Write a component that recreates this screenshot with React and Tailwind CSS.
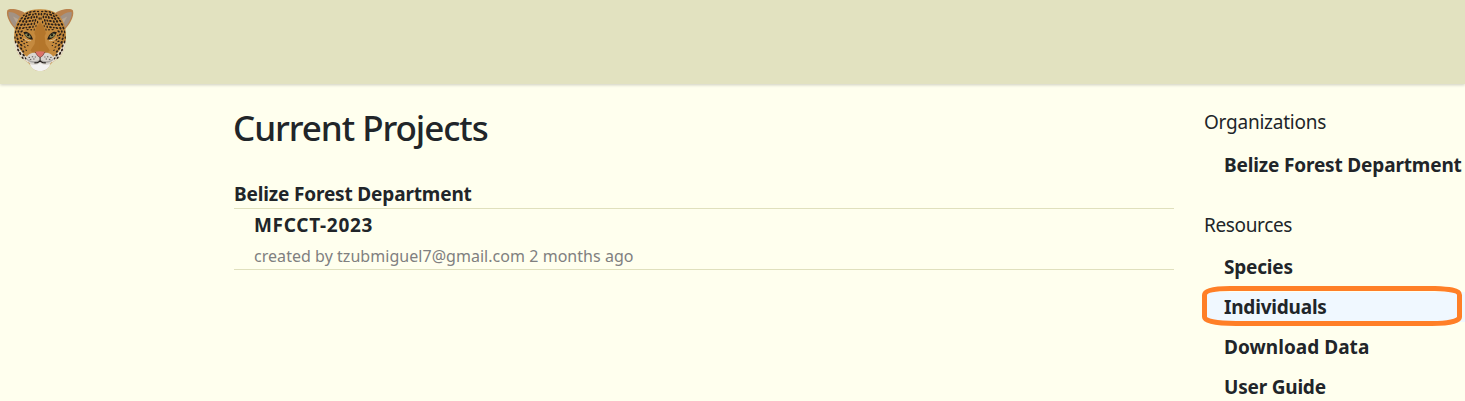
const SPOTS = [
  // x, y, width, height, rotation — left half of the face, mirrored for the right
  [38, 11.4, 1.6, 1, 0], [34.2, 11.4, 2.2, 1, -10], [30.4, 12, 1.8, 1, -20], [27, 13.4, 2, 1.1, -30],
  [38.8, 14.2, 1, 1.9, 0], [35.6, 13.8, 1.6, 1.2, 20], [33, 14.6, 1.2, 1.6, 10], [29.6, 14.6, 2.1, 1.2, -20], [26.2, 16.2, 1.8, 1.2, -30], [23.8, 15.4, 1.6, 1, -35],
  [36.8, 17, 1.1, 1.9, 0], [34.2, 17.2, 1.2, 1.5, 0], [31.4, 17.4, 1.2, 2.1, 20], [28.2, 18, 2, 1.3, -30], [25, 18.8, 1.4, 1.8, 30], [21.8, 18.2, 1.9, 1.1, -40],
  [39.2, 18.6, 0.9, 1.8, 0], [35.4, 20.4, 1.1, 2, 10], [32.8, 20.6, 1.2, 1.7, 30], [29.8, 21, 1.9, 1.3, -10], [26.4, 21.6, 1.3, 1.9, 20], [23.2, 21.4, 1.4, 1.8, 30], [20, 21, 2, 1.2, -50],
  [37.6, 22.2, 0.8, 1.9, 0], [34.4, 23.6, 1, 1.8, 10], [31.4, 24, 1.2, 1.7, 30], [28.2, 24.4, 2, 1.2, -15], [24.6, 24.6, 1.3, 1.8, 40], [21.4, 24.8, 2, 1.3, -30], [18.2, 24.4, 1.9, 1.3, -50],
  [36, 26, 0.7, 1.6, 5], [33, 26.8, 1, 1.7, 10], [29.8, 27.2, 1.9, 1.2, -20], [26.4, 27.6, 1.3, 1.3, 0], [23.4, 28, 1.9, 1.2, -30], [19.8, 28.2, 1.3, 2, 30], [16.8, 28, 1.2, 2, 30],
  [34.2, 29.6, 0.7, 1.6, 5], [31.2, 29.8, 1.2, 1.1, 0], [27.6, 29.6, 1.6, 0.8, 0], [21.6, 31.4, 1.9, 1.2, -40], [18.4, 31.6, 1.2, 1.7, 0], [15.6, 32, 0.9, 2, 10],
  [20, 34.4, 2, 1.2, 40], [16.8, 35.2, 1.2, 2, -10], [22.4, 35.6, 1, 1.2, 0],
  [20.8, 38, 1.5, 1.3, 20], [17.6, 38.8, 1.2, 1.9, -30], [15, 37.6, 0.8, 1.8, 0], [23.8, 39.8, 1.4, 0.9, 20],
  [21.8, 41.4, 1.6, 1, 20], [18.6, 42.4, 1.4, 2, -30], [15.6, 42, 1, 2, -10], [26.8, 42.4, 1.2, 0.7, 20], [24.2, 43.6, 1.2, 0.9, 25],
  [21.2, 45, 1.9, 1.2, 40], [17.6, 46, 1.2, 2.2, -20], [27.8, 45.6, 1, 0.7, 20], [24.8, 47, 1.4, 0.9, 30],
  [21.2, 48.6, 1.8, 1.2, 50], [18.2, 50, 1.2, 2.1, -30], [26.2, 50.2, 1.1, 0.8, 25],
  [23.2, 51.4, 1.7, 1.2, 50], [20.2, 53.4, 1.3, 2.2, -30], [23.6, 55.2, 1.3, 2, -40], [22.6, 57.8, 1.1, 1.8, -40], [25.6, 58.4, 1, 1.6, -30],
];

function FaceHalf() {
  return (
    <g>
      <path d="M17 31 C11 25 5.6 17 7.2 10.4 C10 7.6 21 9.6 26 14 Z" fill="#b9814c" />
      <path d="M16.6 28.5 C12 25 7.8 17 8.6 12 C12.4 11.4 20 15 22.6 20 Z" fill="#a29284" />
      <path d="M17.6 25 L13 16.6 L19 19.5 L21 21.5 Z" fill="#b7a590" />
      <path d="M40.2 9.2 C29 8.8 21 13.5 18 20 C15 25 14 31 14.2 38 C14.6 45 16 51 19.5 56 C23 60 28.6 61.6 31.6 67 C33.8 70.2 37 71 40.2 71 Z" fill="#c58a3c" />
      <path d="M14.2 41 C14.6 46 16 51 19.5 56 C22 59 25.5 60.6 28.4 63 L29 58 C24 55 19 50 17 43 Z" fill="#e6decf" />
      <path d="M40.2 22 L36.5 27 L34.6 32 L33 41 L30 50 L34 54 L40.2 57 Z" fill="#b4762b" />
      <path d="M33 31 L35.6 36 L34.6 44 L30 51 L27 44.5 L32 40.5 Z" fill="#c58a3f" />
      <path d="M40.2 56 L36 52.8 C31 52 27 55 26.4 58.5 C27.3 61.4 30 62.8 31.6 67 C33.8 70.2 37 71 40.2 71 Z" fill="#d9d5cf" />
      <path d="M40.2 63 C36.6 65.4 32 65 29.8 64 C31.6 68.8 35.4 71 40.2 71 Z" fill="#f3f2f1" />
      <path d="M27 60 C31 63.5 36 63.8 40.2 61.8 L40.2 59.6 C36 62 30.5 61.8 27 58.8 Z" fill="#aaa7a4" />
      {SPOTS.map(([x, y, rx, ry, a]) => (
        <ellipse key={`${x}-${y}`} cx={x} cy={y} rx={rx * 0.76} ry={ry * 0.74} transform={`rotate(${a} ${x} ${y})`} fill="#2b2018" />
      ))}
      <path d="M23.4 32.2 C26 30.8 30.5 32 33 39.4 C29.5 39.8 25.5 38 23.4 32.2 Z" fill="#211c16" />
      <path d="M24.8 34 C27.4 32.6 30 34 31 37.6 C28.4 38.2 26 37 24.8 34 Z" fill="#898855" />
      <circle cx="28.2" cy="35.2" r="1.1" fill="#16140f" />
      <path d="M24.4 38.6 C26 40.4 29 40.9 31.2 40.6" stroke="#dfc498" strokeWidth="1" fill="none" />
      <path d="M28.6 57.4 h1.4 M31.8 56.8 h1.4 M29.8 59.4 h1.5 M33.2 59 h1.3 M34.8 57 h1" stroke="#4d4845" strokeWidth="0.9" />
      <path d="M40.2 61 L37.4 62.8 L34.4 62.9" stroke="#211c1a" strokeWidth="1.1" fill="none" />
    </g>
  );
}

function JaguarLogo() {
  return (
    <svg className="h-20 w-20 shrink-0" viewBox="0 0 80 80" role="img" aria-label="Jaguar">
      <FaceHalf />
      <g transform="matrix(-1 0 0 1 80.2 0)">
        <FaceHalf />
      </g>
      <path d="M35.2 51.8 Q40.1 50.6 45 51.8 L42.8 55.4 L40.1 57.4 L37.4 55.4 Z" fill="#dc7169" />
      <path d="M35.2 52 L37.4 55.6 L40.1 57.6 L42.8 55.6 L45 52" stroke="#5b2a23" strokeWidth="0.6" fill="none" />
      <path d="M40.1 57.4 V61.6" stroke="#211c1a" strokeWidth="0.9" />
    </svg>
  );
}

const RESOURCES = [
  { label: "Species", spacing: "tracking-[-0.2px]" },
  { label: "Individuals", spacing: "tracking-[-0.2px]", active: true },
  { label: "Download Data", spacing: "tracking-[0.04px]" },
  { label: "User Guide", spacing: "tracking-[-0.2px]" },
];

export default function App() {
  return (
    <div className="flex h-[401px] w-[1465px] flex-col overflow-hidden bg-[#ffffee] font-['Noto_Sans','Open_Sans',sans-serif] text-[#212529]">
      <header className="flex h-[84px] shrink-0 items-start bg-[#e2e2c0] shadow-[0_1px_3px_rgba(0,0,0,0.2)]">
        <JaguarLogo />
      </header>
      <div className="flex flex-1">
        <main className="ml-[233px] w-[941px] pt-[21px]">
          <h1 className="h-12 text-[35px] leading-[46px] font-medium tracking-[-1.06px] whitespace-nowrap">Current Projects</h1>
          <h2 className="mt-[26px] ml-px h-[30px] border-b border-[#e0e0bd] text-[19px] leading-[30px] font-bold tracking-[-0.15px] whitespace-nowrap">Belize Forest Department</h2>
          <section className="ml-px h-[61px] border-b border-[#e0e0bd] pl-5 whitespace-nowrap">
            <h3 className="h-8 text-[19px] leading-8 font-bold tracking-[0.7px]">MFCCT-2023</h3>
            <p className="h-7 text-[16px] leading-[31px] tracking-[0.04px] text-[#808080]">created by tzubmiguel7@gmail.com 2 months ago</p>
          </section>
        </main>
        <aside className="ml-[30px] w-[261px] pt-[23px] whitespace-nowrap">
          <h4 className="h-[30px] text-[19px] leading-[30px] tracking-[-0.24px]">Organizations</h4>
          <p className="mt-3 h-[32px] pl-5 text-[19px] leading-[32px] font-bold tracking-[-0.15px]">Belize Forest Department</p>
          <h4 className="mt-7 h-[30px] text-[19px] leading-[32px] tracking-[-0.36px]">Resources</h4>
          <nav className="mt-2 flex flex-col">
            {RESOURCES.map(({ label, spacing, active }) => (
              <a key={label} className="relative flex h-10 items-center text-[19px] font-bold">
                <span className={active ? "flex h-[30px] w-full items-center bg-[#f0f8ff] pl-5" : "pl-5"}>
                  <span className={spacing}>{label}</span>
                </span>
                {active && (
                  <svg className="absolute -top-px -left-0.5 h-10 w-[260px]" viewBox="0 0 260 40" fill="none">
                    <path d="M28 2.5 H233 C246 3 257.5 4 257.5 9 V31 C257.5 35.5 244 37.5 230 37.5 H34 C14 37.5 2.5 35 2.5 31 V9 C2.5 4 14 2.5 28 2.5 Z" stroke="#ff7f27" strokeWidth="5" />
                  </svg>
                )}
              </a>
            ))}
          </nav>
        </aside>
      </div>
    </div>
  );
}
